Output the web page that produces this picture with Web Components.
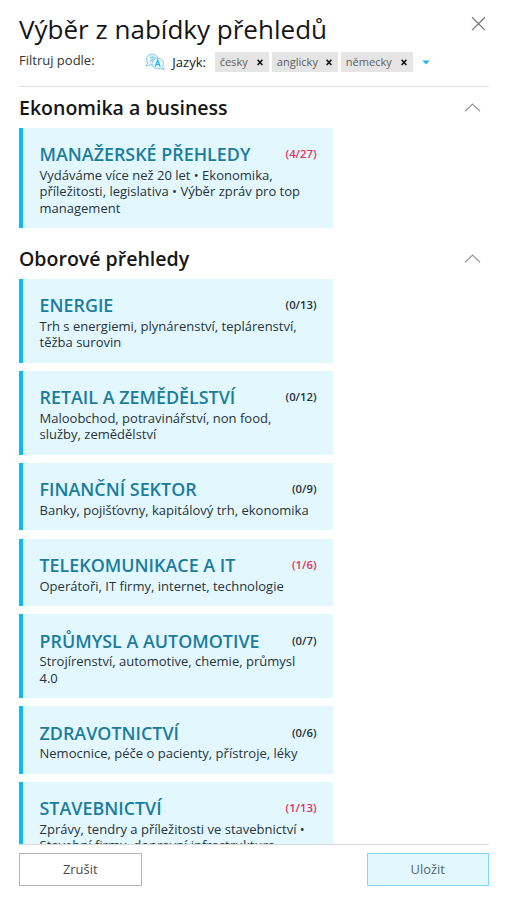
<!DOCTYPE html>
<html lang="cs">
<head>
<meta charset="utf-8">
<title>Výběr z nabídky přehledů</title>
<style>
html, body { margin: 0; height: 100%; background: #fff; }
body { font-family: "Open Sans", "Noto Sans", sans-serif; font-size: 13px; color: #222; overflow: hidden; }
</style>
</head>
<body>
<report-dialog>
  <dialog-header slot="header" heading="Výběr z nabídky přehledů">
    <language-filter label="Jazyk:">
      <filter-tag style="width:53.5px">česky</filter-tag>
      <filter-tag style="width:65.3px">anglicky</filter-tag>
      <filter-tag style="width:71.5px">německy</filter-tag>
    </language-filter>
  </dialog-header>
  <report-section heading="Ekonomika a business">
    <report-card heading="MANAŽERSKÉ PŘEHLEDY" count="(4/27)" active>Vydáváme více než 20 let • Ekonomika, příležitosti, legislativa • Výběr zpráv pro top management</report-card>
  </report-section>
  <report-section heading="Oborové přehledy">
    <report-card heading="ENERGIE" count="(0/13)">Trh s energiemi, plynárenství, teplárenství, těžba surovin</report-card>
    <report-card heading="RETAIL A ZEMĚDĚLSTVÍ" count="(0/12)">Maloobchod, potravinářství, non food, služby, zemědělství</report-card>
    <report-card heading="FINANČNÍ SEKTOR" count="(0/9)">Banky, pojišťovny, kapitálový trh, ekonomika</report-card>
    <report-card heading="TELEKOMUNIKACE A IT" count="(1/6)" active>Operátoři, IT firmy, internet, technologie</report-card>
    <report-card heading="PRŮMYSL A AUTOMOTIVE" count="(0/7)">Strojírenství, automotive, chemie, průmysl 4.0</report-card>
    <report-card heading="ZDRAVOTNICTVÍ" count="(0/6)">Nemocnice, péče o pacienty, přístroje, léky</report-card>
    <report-card heading="STAVEBNICTVÍ" count="(1/13)" active>Zprávy, tendry a příležitosti ve stavebnictví • Stavební firmy, dopravní infrastruktura</report-card>
  </report-section>
  <dialog-button slot="footer">Zrušit</dialog-button>
  <dialog-button slot="footer" primary>Uložit</dialog-button>
</report-dialog>
<script>
function define(name, render) {
  customElements.define(name, class extends HTMLElement {
    constructor() {
      super();
      this.attachShadow({ mode: 'open' });
    }
    connectedCallback() {
      const t = document.createElement('template');
      t.innerHTML = render(this);
      this.shadowRoot.replaceChildren(t.content.cloneNode(true));
    }
  });
}

define('report-dialog', () => `
<style>
:host { display: flex; flex-direction: column; height: 900px; box-sizing: border-box; padding: 0 18px 14.5px 19px; }
main { flex: 1; min-height: 0; overflow: hidden; }
footer { display: flex; justify-content: space-between; border-top: 1px solid #d9dcdd; padding-top: 8.5px; flex: none; }
</style>
<slot name="header"></slot>
<main><slot></slot></main>
<footer><slot name="footer"></slot></footer>`);

define('dialog-header', el => `
<style>
:host { display: flex; flex-direction: column; flex: none; height: 87px; box-sizing: border-box; border-bottom: 1px solid #e0e0e0; }
.top { display: flex; justify-content: space-between; align-items: flex-start; padding-top: 11px; height: 36px; }
h1 { margin: 0; font-weight: 400; font-size: 26.04px; line-height: 36px; color: #161616; white-space: nowrap; }
.top svg { margin: 5px 3px 0 0; display: block; }
.row { display: flex; align-items: flex-start; justify-content: space-between; padding-top: 4.5px; }
.by { line-height: 17px; font-size: 13px; color: #333; }
slot { display: block; }
</style>
<div class="top"><h1>${el.getAttribute('heading')}</h1>
<svg width="15" height="15" viewBox="0 0 15 15" fill="none" stroke="#777" stroke-width="1.25"><path d="M1 1.2 14 14.1M14 1.2 1 14.1"/></svg></div>
<div class="row"><span class="by">Filtruj podle:</span><slot></slot></div>`);

define('language-filter', el => `
<style>
:host { display: flex; align-items: center; height: 21px; margin-right: 59.3px; }
.icon { display: block; margin-right: 7.8px; }
.label { font-size: 13.05px; line-height: 20px; color: #222; margin-right: 9px; width: 33.7px; white-space: nowrap; }
.tags { display: flex; gap: 3.7px; }
.caret { display: block; margin-left: 9px; }
</style>
<svg class="icon" width="20" height="18" viewBox="0 0 20 18" fill="none" stroke="#55b4e4" stroke-width=".75">
<path fill="#effaff" d="M7 1.1C3.8 1.1 1.3 3.4 1.3 6.3c0 1.6.6 2.6 1.5 3.5L.8 12.7c2 .1 3.2-.3 4-.9.8.2 1.5.2 2.2.2 3.2 0 5.9-2.6 5.9-5.6S10.2 1.1 7 1.1Z"/>
<path d="M4.5 4.3h5.4M7.2 3v1.3M8.8 4.3C8 6.700 6.500 8 4.600 8.700M5.500 5.500c.7 1.500 1.700 2.500 3.200 3.100"/>
<path fill="#effaff" d="M12.700 5.300c-3.200 0-5.700 2.400-5.700 5.300s2.500 5.200 5.700 5.200c.9 0 1.700-.1 2.500-.5 1 .7 2.300 1.200 4.200 1l-1.900-2.700c.6-.8 1-1.800 1-3 0-2.900-2.600-5.300-5.800-5.300Z"/>
<path stroke="#22aee9" stroke-width="1.2" d="m10.200 13.700 2.500-6.500 2.500 6.500M11 11.500h3.400"/></svg>
<span class="label">${el.getAttribute('label')}</span>
<div class="tags"><slot></slot></div>
<svg class="caret" width="8" height="5" viewBox="0 0 8 5"><path fill="#20b6f5" d="M.3.5h7.400L4 4.600Z"/></svg>`);

define('filter-tag', () => `
<style>
:host { display: flex; align-items: center; justify-content: space-between; box-sizing: border-box; height: 20.6px; padding: 0 5.6px 0 4.6px; background: #e5e5e5; font-size: 11.05px; color: #606060; line-height: 20px; }
svg { display: block; }
</style>
<span><slot></slot></span>
<svg width="6" height="7" viewBox="0 0 6 7" stroke="#161616" stroke-width="1.7"><path d="M.6.7 5.4 6M5.4.7.6 6"/></svg>`);

define('report-section', el => `
<style>
:host { display: block; padding-top: 6.5px; }
:host(:not(:first-of-type)) { padding-top: 16.4px; }
header { display: flex; align-items: center; justify-content: space-between; height: 28px; margin-bottom: 6.5px; }
h2 { margin: 0; font-size: 19.55px; font-weight: 600; line-height: 28px; color: #161616; }
svg { display: block; margin: 0 8px 0 0; }
.list { display: flex; flex-direction: column; gap: 8.2px; width: 314px; }
</style>
<header><h2>${el.getAttribute('heading')}</h2>
<svg width="17" height="9" viewBox="0 0 17 9" fill="none" stroke="#999" stroke-width="1.2"><path d="m1 8.200 7.500-7.200L16 8.200"/></svg></header>
<div class="list"><slot></slot></div>`);

define('report-card', el => `
<style>
:host { display: block; box-sizing: border-box; background: #e3f7fe; border-left: 4px solid #12b9f1; padding: 15.4px 16.5px 12px; }
.head { display: flex; justify-content: space-between; height: 22px; margin-bottom: 1.6px; line-height: 22px; }
h3 { margin: 0; font-size: 17.9px; font-weight: 600; color: #1b7d9d; white-space: nowrap; }
.count { font-size: 11.3px; font-weight: 600; color: #263238; }
:host([active]) .count { color: #e5305c; }
p { margin: 0; padding-right: 5px; font-size: 13.03px; line-height: 16.4px; color: #27343a; }
</style>
<div class="head"><h3>${el.getAttribute('heading')}</h3><span class="count">${el.getAttribute('count')}</span></div>
<p><slot></slot></p>`);

define('dialog-button', () => `
<style>
:host { display: block; box-sizing: border-box; width: 122.5px; height: 32.5px; border: 1px solid #b5b5b5; background: #fff; color: #4a4a4a; font-size: 12.9px; line-height: 31px; text-align: center; }
:host([primary]) { background: #e3f7fe; border-color: #83d4f5; color: #53666e; }
</style>
<slot></slot>`);
</script>
</body>
</html>
